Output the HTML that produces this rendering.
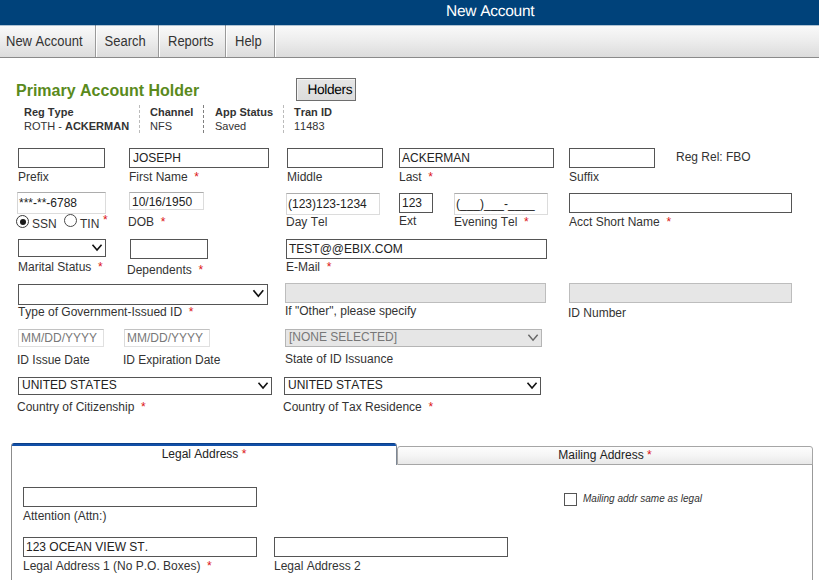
<!DOCTYPE html>
<html><head><meta charset="utf-8"><title>New Account</title>
<style>
*{box-sizing:border-box;margin:0;padding:0}
html,body{width:819px;height:580px;overflow:hidden;background:#fff}
body{font-family:"Liberation Sans",Arial,sans-serif;font-size:12px;color:#333;position:relative;font-kerning:none}
.abs,.l,.i,.s{position:absolute}
#hdr{position:absolute;left:0;top:0;width:819px;height:25px;background:#00427a;z-index:2;box-shadow:0 1px 0 rgba(0,66,122,.3)}
#hdr span{position:absolute;left:446px;top:3px;font-size:15.5px;letter-spacing:-0.27px;text-rendering:geometricPrecision;color:#fff;line-height:17px;white-space:nowrap}
#menu{position:absolute;left:0;top:25px;width:819px;height:33px;background:linear-gradient(#fafafa,#eee 45%,#dcdcdc);border-bottom:1px solid #8a8a8a}
#menu a{position:absolute;top:0;height:32px;line-height:34px;font-size:13px;color:#333;white-space:nowrap;border-right:1px solid #9a9a9a;box-shadow:1px 0 0 #fff;text-decoration:none;padding-left:6px}
h1{position:absolute;left:16px;top:82px;font-size:16px;line-height:18px;font-weight:bold;color:#5a8a1c;white-space:nowrap}
.l{white-space:nowrap;line-height:14px;font-size:12px;color:#333}
.r{color:#dc1414;}
.i{border:1px solid #555;background:#fff;height:20px;font-size:12px;line-height:18px;padding-left:3px;color:#222;white-space:nowrap;overflow:hidden}
.i.lt{border-color:#adadad #dcdcdc #dcdcdc #d6d6d6}
.i.dis{background:#e6e6e6;border-color:#bdbdbd}
.i.ph{color:#787878;border-color:#c2c2c2 #e0e0e0 #e0e0e0 #dadada !important}
.s{border:1px solid #555;background:#fff;height:18px;font-size:12px;line-height:15px;padding-left:3px;color:#222;white-space:nowrap;overflow:hidden}
.s svg{position:absolute;right:0;top:3px}
.s.dis{background:#e6e6e6;border-color:#b5b5b5;color:#777}
.info{position:absolute;top:105px;font-size:11px;line-height:14px;color:#333;white-space:nowrap}
.info b{display:block;color:#333}
.vd{position:absolute;top:105px;height:28px;width:0;border-left:1px dashed #bbb}
#menu a i{display:inline-block;font-style:normal;transform:scaleY(1.1);transform-origin:0 21px}
</style></head><body>
<div id="hdr"><span>New Account</span></div>
<div id="menu">
<a style="left:0;width:96px"><i>New Account</i></a>
<a style="left:98px;width:61px;padding-left:6.5px"><i>Search</i></a>
<a style="left:160px;width:66px;padding-left:8px"><i>Reports</i></a>
<a style="left:227px;width:48px;padding-left:8px"><i>Help</i></a>
</div>
<h1>Primary Account Holder</h1>
<div class="abs" style="left:296px;top:78px;width:60px;height:23px;border:1px solid #6e6e6e;background:linear-gradient(#e6e6e6,#dcdcdc);font-size:13.7px;letter-spacing:-0.33px;text-rendering:geometricPrecision;line-height:21px;padding-left:10.5px;color:#000;box-shadow:inset 1px 1px 0 #f4f4f4">Holders</div>

<div class="info" style="left:24px"><b>Reg Type</b>ROTH - <strong>ACKERMAN</strong></div>
<div class="vd" style="left:139px"></div>
<div class="info" style="left:150px"><b>Channel</b>NFS</div>
<div class="vd" style="left:203px;border-left-color:#808080"></div>
<div class="info" style="left:215px"><b>App Status</b>Saved</div>
<div class="vd" style="left:283px"></div>
<div class="info" style="left:294px"><b>Tran ID</b>11483</div>

<!-- row 1 -->
<div class="i" style="left:18px;top:148px;width:87px"></div>
<div class="i" style="left:129px;top:148px;width:140px">JOSEPH</div>
<div class="i" style="left:287px;top:148px;width:96px"></div>
<div class="i" style="left:399px;top:148px;width:155px;padding-left:2px">ACKERMAN</div>
<div class="i" style="left:569px;top:148px;width:86px"></div>
<div class="l" style="left:676px;top:150px">Reg Rel: FBO</div>
<div class="l" style="left:18px;top:170px">Prefix</div>
<div class="l" style="left:129px;top:170px">First Name &nbsp;<span class="r">*</span></div>
<div class="l" style="left:287px;top:170px">Middle</div>
<div class="l" style="left:399px;top:170px">Last &nbsp;<span class="r">*</span></div>
<div class="l" style="left:569px;top:170px">Suffix</div>

<!-- row 2 -->
<div class="i lt" style="left:17px;top:192px;width:89px;height:22px;padding-left:1px;line-height:20px">***-**-6788</div>
<div class="i lt" style="left:129px;top:192px;width:75px;height:18px;padding-left:2px;line-height:18px">10/16/1950</div>
<div class="i lt" style="left:286px;top:193px;width:94px;height:22px;line-height:20px;padding-left:1px">(123)123-1234</div>
<div class="i" style="left:399px;top:193px;width:34px;height:20px;padding-left:2px">123</div>
<div class="i lt" style="left:454px;top:193px;width:94px;height:22px;line-height:20px;padding-left:1px">(___)___-____</div>
<div class="i" style="left:569px;top:193px;width:223px;height:20px"></div>
<div class="abs" style="left:16px;top:215px;width:13px;height:13px;border:1px solid #3a3a3a;border-radius:50%;background:#fff"><div style="position:absolute;left:2.5px;top:2.5px;width:6px;height:6px;border-radius:50%;background:#1a1a1a"></div></div>
<div class="l" style="left:32px;top:217px">SSN</div>
<div class="abs" style="left:64px;top:214px;width:13px;height:13px;border:1px solid #4a4a4a;border-radius:50%;background:#fff"></div>
<div class="l" style="left:80px;top:217px">TIN</div>
<div class="l r" style="left:103px;top:213px">*</div>
<div class="l" style="left:128px;top:215px">DOB &nbsp;<span class="r">*</span></div>
<div class="l" style="left:286px;top:215px">Day Tel</div>
<div class="l" style="left:399px;top:214px">Ext</div>
<div class="l" style="left:454px;top:215px">Evening Tel &nbsp;<span class="r">*</span></div>
<div class="l" style="left:569px;top:215px">Acct Short Name &nbsp;<span class="r">*</span></div>

<!-- row 3 -->
<div class="s" style="left:18px;top:239px;width:88px"><svg width="14" height="10" viewBox="0 0 14 10"><path d="M1.5 1.74 L6.03 7 L10.56 1.74" fill="none" stroke="#111" stroke-width="1.6"/></svg></div>
<div class="i" style="left:130px;top:239px;width:78px"></div>
<div class="i" style="left:286px;top:239px;width:261px;padding-left:2px">TEST@@EBIX.COM</div>
<div class="l" style="left:18px;top:260px">Marital Status &nbsp;<span class="r">*</span></div>
<div class="l" style="left:127px;top:263px">Dependents &nbsp;<span class="r">*</span></div>
<div class="l" style="left:286px;top:260px">E-Mail &nbsp;<span class="r">*</span></div>

<!-- row 4 -->
<div class="s" style="left:18px;top:284px;width:250px;height:21px"><svg width="16" height="11" viewBox="0 0 16 11" style="top:4px"><path d="M2.43 1.27 L7.35 7.23 L12.27 1.27" fill="none" stroke="#111" stroke-width="1.7"/></svg></div>
<div class="i dis" style="left:285px;top:283px;width:261px;height:20px"></div>
<div class="i dis" style="left:569px;top:283px;width:223px;height:20px"></div>
<div class="l" style="left:18px;top:305px">Type of Government-Issued ID &nbsp;<span class="r">*</span></div>
<div class="l" style="left:285px;top:304px">If "Other", please specify</div>
<div class="l" style="left:568px;top:306px">ID Number</div>

<!-- row 5 -->
<div class="i lt ph" style="left:18px;top:329px;width:86px;height:18px;line-height:16px;padding-left:2px">MM/DD/YYYY</div>
<div class="i lt ph" style="left:124px;top:329px;width:86px;height:18px;line-height:16px;padding-left:2px">MM/DD/YYYY</div>
<div class="s dis" style="left:285px;top:329px;width:257px"><svg width="14" height="10" viewBox="0 0 14 10"><path d="M1.4 1.7 L6.03 7.1 L10.66 1.7" fill="none" stroke="#666" stroke-width="1.45"/></svg>[NONE SELECTED]</div>
<div class="l" style="left:17px;top:353px">ID Issue Date</div>
<div class="l" style="left:123px;top:353px">ID Expiration Date</div>
<div class="l" style="left:285px;top:352px">State of ID Issuance</div>

<!-- row 6 -->
<div class="s" style="left:18px;top:377px;width:254px"><svg width="14" height="10" viewBox="0 0 14 10"><path d="M1.5 1.74 L6.03 7 L10.56 1.74" fill="none" stroke="#111" stroke-width="1.6"/></svg>UNITED STATES</div>
<div class="s" style="left:284px;top:377px;width:257px"><svg width="14" height="10" viewBox="0 0 14 10"><path d="M1.5 1.74 L6.03 7 L10.56 1.74" fill="none" stroke="#111" stroke-width="1.6"/></svg>UNITED STATES</div>
<div class="l" style="left:17px;top:400px">Country of Citizenship &nbsp;<span class="r">*</span></div>
<div class="l" style="left:283px;top:400px">Country of Tax Residence &nbsp;<span class="r">*</span></div>

<!-- tabs -->
<div class="abs" style="left:11px;top:463px;width:802px;height:120px;border-left:1px solid #8c8c8c;border-right:1px solid #999"></div>
<div class="abs" style="left:11px;top:443px;width:386px;height:22px;border-left:1px solid #8c8c8c;border-right:1px solid #7d8794;border-radius:3px 3px 0 0;background:#fff;text-align:center;line-height:23px;color:#222;overflow:hidden"><div style="position:absolute;left:-1px;right:-1px;top:0;height:3px;background:linear-gradient(#0b3f88 0,#0b3f88 1px,#1250a8 1px)"></div>Legal Address <span class="r">*</span></div>
<div class="abs" style="left:397px;top:446px;width:416px;height:19px;border:1px solid #a6a6a6;border-radius:3px 3px 0 0;background:linear-gradient(#fdfdfd,#f5f5f5 50%,#e8e8e8);text-align:center;line-height:16px;color:#222">Mailing Address <span class="r">*</span></div>

<div class="i" style="left:23px;top:487px;width:234px"></div>
<div class="l" style="left:23px;top:509px">Attention (Attn:)</div>
<div class="abs" style="left:564px;top:493px;width:13px;height:13px;border:1px solid #555;background:#fff"></div>
<div class="l" style="left:583px;top:493px;font-size:10px;font-style:italic;line-height:12px">Mailing addr same as legal</div>
<div class="i" style="left:23px;top:537px;width:234px;padding-left:2px">123 OCEAN VIEW ST.</div>
<div class="i" style="left:274px;top:537px;width:234px"></div>
<div class="l" style="left:23px;top:559px">Legal Address 1 (No P.O. Boxes) &nbsp;<span class="r">*</span></div>
<div class="l" style="left:274px;top:559px">Legal Address 2</div>
</body></html>
